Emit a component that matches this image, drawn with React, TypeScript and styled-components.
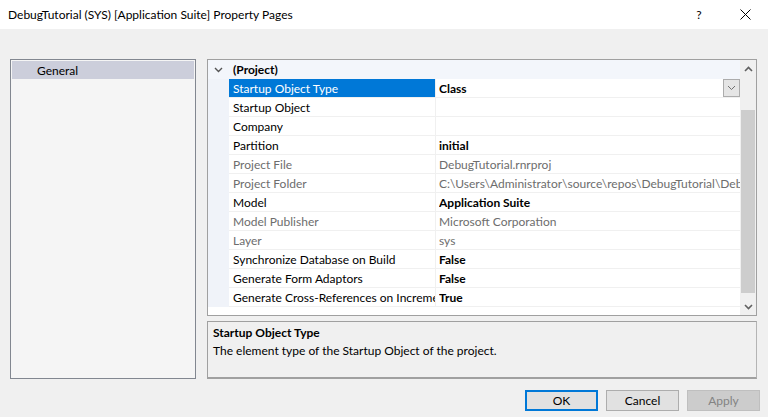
import React, { FC } from 'react';
import styled, { createGlobalStyle } from 'styled-components';

const GlobalStyle = createGlobalStyle`
	html, body {
		margin: 0;
		padding: 0;
		background: #f0f0f0;
	}
	* {
		box-sizing: border-box;
	}
`;

const Window = styled.div`
	width: 768px;
	height: 417px;
	display: flex;
	flex-direction: column;
	background: #f0f0f0;
	font-family: Lato, 'Noto Sans', sans-serif;
	font-size: 12px;
	color: #000;
	overflow: hidden;
`;

const TitleBar = styled.div`
	height: 29px;
	background: #fff;
	display: flex;
	align-items: center;
`;

const TitleText = styled.div`
	flex: 1;
	padding-left: 8px;
	font-size: 12px;
`;

const CaptionButton = styled.div`
	width: 46px;
	height: 29px;
	display: flex;
	align-items: center;
	justify-content: center;
	font-size: 12px;
`;

const Body = styled.div`
	flex: 1;
	display: flex;
	flex-direction: column;
	padding: 30px 8px 0 10px;
`;

const Main = styled.div`
	display: flex;
	column-gap: 11px;
	padding-right: 3px;
`;

const PageList = styled.div`
	width: 186px;
	flex-shrink: 0;
	height: 320px;
	border: 1px solid #828790;
	background: #f5f5f5;
	padding: 1px;
`;

const PageItem = styled.div<{ $selected?: boolean }>`
	height: 18px;
	line-height: 19px;
	padding-left: 25px;
	background: ${(p) => (p.$selected ? '#cccedb' : 'transparent')};
`;

const RightColumn = styled.div`
	flex: 1;
	min-width: 0;
	display: flex;
	flex-direction: column;
	row-gap: 5px;
`;

const Grid = styled.div`
	height: 257px;
	border: 1px solid #a0a0a0;
	background: #fff;
	display: flex;
`;

const GridRows = styled.div`
	flex: 1;
	min-width: 0;
	display: flex;
	flex-direction: column;
	overflow: hidden;
`;

const Row = styled.div<{ $header?: boolean }>`
	height: 19px;
	display: flex;
	flex-shrink: 0;
	background: ${(p) => (p.$header ? '#f3f6fb' : '#fff')};
`;

const Margin = styled.div`
	width: 21px;
	flex-shrink: 0;
	background: #f0f3f9;
	display: flex;
	align-items: center;
	justify-content: center;
`;

const HeaderMargin = styled(Margin)`
	background: transparent;
`;

const HeaderLabel = styled.div`
	flex: 1;
	padding-left: 4px;
	line-height: 20px;
	font-weight: bold;
`;

const NameCell = styled.div<{ $selected?: boolean; $disabled?: boolean }>`
	width: 207px;
	flex-shrink: 0;
	padding-left: 4px;
	line-height: 19px;
	white-space: nowrap;
	overflow: hidden;
	text-overflow: clip;
	border-bottom: 1px solid #f0f0f0;
	border-right: 1px solid #f0f0f0;
	background: ${(p) => (p.$selected ? '#0078d7' : 'transparent')};
	color: ${(p) => (p.$selected ? '#fff' : p.$disabled ? '#6d6d6d' : '#000')};
`;

const ValueCell = styled.div<{ $bold?: boolean; $disabled?: boolean }>`
	flex: 1;
	min-width: 0;
	display: flex;
	align-items: flex-start;
	padding-left: 3px;
	line-height: 19px;
	white-space: nowrap;
	overflow: hidden;
	border-bottom: 1px solid #f0f0f0;
	font-weight: ${(p) => (p.$bold ? 'bold' : 'normal')};
	color: ${(p) => (p.$disabled ? '#6d6d6d' : '#000')};
`;

const ValueText = styled.span`
	flex: 1;
	overflow: hidden;
`;

const DropButton = styled.div`
	width: 17px;
	height: 18px;
	border: 1px solid #acacac;
	background: #e5e5e5;
	display: flex;
	align-items: center;
	justify-content: center;
	flex-shrink: 0;
`;

const ScrollBar = styled.div`
	width: 16px;
	flex-shrink: 0;
	background: #f0f0f0;
	display: flex;
	flex-direction: column;
	align-items: center;
`;

const ScrollArrow = styled.div`
	height: 17px;
	width: 16px;
	display: flex;
	align-items: center;
	justify-content: center;
`;

const ScrollTrack = styled.div`
	flex: 1;
	width: 16px;
	display: flex;
	flex-direction: column;
	padding: 33px 1px 5px 1px;
`;

const ScrollThumb = styled.div`
	flex: 1;
	background: #cdcdcd;
`;

const Description = styled.div`
	height: 58px;
	border: 1px solid #a0a0a0;
	border-bottom-width: 2px;
	border-right-color: #b4b4b4;
	padding: 2px 5px;
	line-height: 18px;
`;

const DescTitle = styled.div`
	font-weight: bold;
`;

const ButtonRow = styled.div`
	display: flex;
	justify-content: flex-end;
	column-gap: 8px;
	margin-top: 11px;
`;

const DialogButton = styled.div<{ $default?: boolean; $disabled?: boolean }>`
	width: 73px;
	height: 21px;
	display: flex;
	align-items: center;
	justify-content: center;
	background: ${(p) => (p.$disabled ? '#cccccc' : '#e1e1e1')};
	border: ${(p) => (p.$default ? '2px solid #0078d7' : p.$disabled ? '1px solid #bfbfbf' : '1px solid #adadad')};
	color: ${(p) => (p.$disabled ? '#838383' : '#000')};
`;

const Chevron: FC<{ up?: boolean; color?: string; w?: number }> = ({ up, color = '#606060', w = 1.6 }) => (
	<svg width="9" height="6" viewBox="0 0 9 6">
		<path d={up ? 'M1 5 L4.5 1.5 L8 5' : 'M1 1 L4.5 4.5 L8 1'} fill="none" stroke={color} strokeWidth={w} />
	</svg>
);

type Prop = { name: string; value: string; bold?: boolean; disabled?: boolean; selected?: boolean };

const props: Prop[] = [
	{ name: 'Startup Object Type', value: 'Class', bold: true, selected: true },
	{ name: 'Startup Object', value: '' },
	{ name: 'Company', value: '' },
	{ name: 'Partition', value: 'initial', bold: true },
	{ name: 'Project File', value: 'DebugTutorial.rnrproj', disabled: true },
	{ name: 'Project Folder', value: 'C:\\Users\\Administrator\\source\\repos\\DebugTutorial\\DebugTutorial', disabled: true },
	{ name: 'Model', value: 'Application Suite', bold: true },
	{ name: 'Model Publisher', value: 'Microsoft Corporation', disabled: true },
	{ name: 'Layer', value: 'sys', disabled: true },
	{ name: 'Synchronize Database on Build', value: 'False', bold: true },
	{ name: 'Generate Form Adaptors', value: 'False', bold: true },
	{ name: 'Generate Cross-References on Incremental Build', value: 'True', bold: true },
];

const App: FC = () => {
	return (
		<Window>
			<GlobalStyle />
			<TitleBar>
				<TitleText>DebugTutorial (SYS) [Application Suite] Property Pages</TitleText>
				<CaptionButton>?</CaptionButton>
				<CaptionButton>
					<svg width="11" height="11" viewBox="0 0 11 11">
						<path d="M0.5 0.5 L10.5 10.5 M10.5 0.5 L0.5 10.5" stroke="#000" strokeWidth="1" />
					</svg>
				</CaptionButton>
			</TitleBar>
			<Body>
				<Main>
					<PageList>
						<PageItem $selected>General</PageItem>
					</PageList>
					<RightColumn>
						<Grid>
							<GridRows>
								<Row $header>
									<HeaderMargin>
										<Chevron color="#555" w={1.4} />
									</HeaderMargin>
									<HeaderLabel>(Project)</HeaderLabel>
								</Row>
								{props.map((p) => (
									<Row key={p.name}>
										<Margin />
										<NameCell $selected={p.selected} $disabled={p.disabled}>
											{p.name}
										</NameCell>
										<ValueCell $bold={p.bold} $disabled={p.disabled}>
											<ValueText>{p.value}</ValueText>
											{p.selected && (
												<DropButton>
													<Chevron color="#707070" w={1} />
												</DropButton>
											)}
										</ValueCell>
									</Row>
								))}
							</GridRows>
							<ScrollBar>
								<ScrollArrow>
									<Chevron up />
								</ScrollArrow>
								<ScrollTrack>
									<ScrollThumb />
								</ScrollTrack>
								<ScrollArrow>
									<Chevron />
								</ScrollArrow>
							</ScrollBar>
						</Grid>
						<Description>
							<DescTitle>Startup Object Type</DescTitle>
							<div>The element type of the Startup Object of the project.</div>
						</Description>
					</RightColumn>
				</Main>
				<ButtonRow>
					<DialogButton $default>OK</DialogButton>
					<DialogButton>Cancel</DialogButton>
					<DialogButton $disabled>Apply</DialogButton>
				</ButtonRow>
			</Body>
		</Window>
	);
};

export default App;
